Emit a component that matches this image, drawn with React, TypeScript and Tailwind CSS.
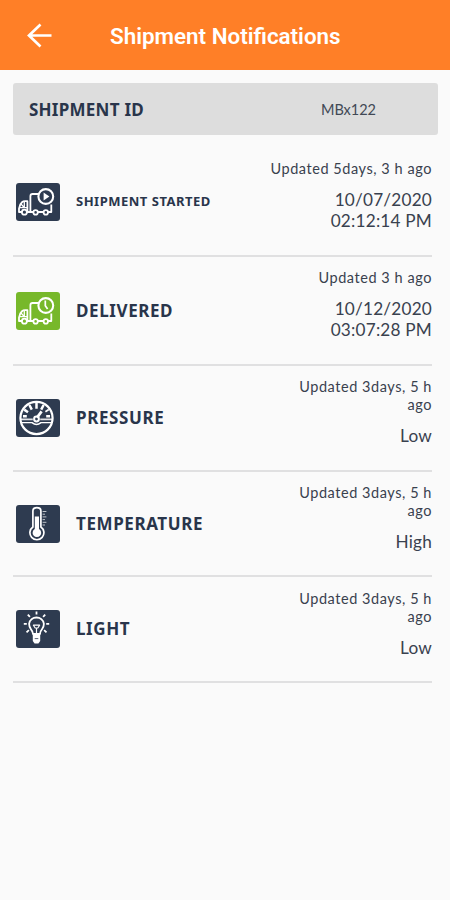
import type { ReactNode } from "react";
import clsx from "clsx";

interface Notification {
  label: string;
  updated: string;
  date?: string;
  value: string;
  icon: ReactNode;
  small?: boolean;
  delivered?: boolean;
}

function Truck({ children, fill }: { children: ReactNode; fill: string }) {
  return (
    <>
      <path d="M14.4 28V13.2Q14.4 11 16.6 11H23" />
      <path d="M35.3 21.5V29H3V25.5Q3.5 21.5 6 19.3Q7.2 18.2 9 18.2H11.4V28" />
      <path d="M8.3 18.5V24.6M3.5 24.6H11.4M5 21L8.3 24.6" strokeWidth="1.3" />
      <circle cx="8.4" cy="29.2" r="2.5" fill={fill} />
      <circle cx="19.6" cy="29.4" r="2.2" fill={fill} />
      <circle cx="29.8" cy="29.4" r="2.2" fill={fill} />
      <circle cx="29.8" cy="13.5" r="7.4" fill={fill} strokeWidth="2.1" />
      {children}
    </>
  );
}

const startedIcon = (
  <Truck fill="#2e3b50">
    <path d="M27.6 9.4L33.4 13.5L27.6 17.6Z" fill="white" stroke="none" />
  </Truck>
);

const deliveredIcon = (
  <Truck fill="#77b82a">
    <path d="M29.3 8.6V13.8L31.6 17" strokeWidth="1.7" />
  </Truck>
);

const pressureIcon = (
  <>
    <circle cx="20.5" cy="19" r="16.1" strokeWidth="2.2" />
    <path d="M7 17.2H10.8M8.2 10.6L12 13.2M13.4 6L15.8 10.6M20.5 4V9.8M27.6 6L25.2 10.6M30.2 17.2H34" strokeWidth="2.5" />
    <path d="M32.8 10.6L29.4 12.8" strokeWidth="1.8" />
    <path d="M5 20.4H16.8M24.2 20.4H36" strokeWidth="1.6" opacity="0.85" />
    <path d="M6 23.6H16Q20.5 27.4 25 23.6H35" strokeWidth="1.4" />
    <path d="M21 18.6L25.6 12.4" strokeWidth="2.7" />
    <circle cx="20.5" cy="20" r="2.4" strokeWidth="2" />
  </>
);

const temperatureIcon = (
  <>
    <path d="M16.9 22V6Q16.9 2.6 20.9 2.6Q24.9 2.6 24.9 6V22A7 7 0 1 1 16.9 22Z" strokeWidth="1.7" />
    <path d="M18.8 11.5H23V24A4.3 4.3 0 1 1 18.8 24Z" fill="white" stroke="none" />
    <path d="M26.6 6.5H30.4M26.6 9.2H29M26.6 11.9H30.4M26.6 14.6H29M26.6 17.3H30.4M26.6 20H29" strokeWidth="1" opacity="0.7" />
  </>
);

const lightIcon = (
  <>
    <path d="M17 24Q16.9 21.5 15 19.3Q13.1 17 13.1 13.8A7.5 7.5 0 0 1 27.9 13.8Q27.9 17 26 19.3Q24.1 21.5 24 24Z" strokeWidth="1.8" />
    <path d="M17.4 15.2H23.6L21.8 18H19.2ZM20.5 18V24" strokeWidth="1.2" />
    <path d="M16.8 25H24.2V31L22.4 33.4H18.6L16.8 31Z" fill="white" stroke="none" />
    <path d="M18.7 28.6H22.3" stroke="#2e3b50" strokeWidth="0.8" />
    <path d="M20.5 1.6V4.4M11.8 4.6L13.9 6.8M29.2 4.6L27.1 6.8M7.8 13.8H10.8M30.2 13.8H33.2M10.5 22.4L12.9 20.2M30.5 22.4L28.1 20.2" strokeWidth="1.8" />
  </>
);

const notifications: Notification[] = [
  {
    label: "SHIPMENT STARTED",
    updated: "Updated 5days, 3 h ago",
    date: "10/07/2020",
    value: "02:12:14 PM",
    icon: startedIcon,
    small: true,
  },
  {
    label: "DELIVERED",
    updated: "Updated 3 h ago",
    date: "10/12/2020",
    value: "03:07:28 PM",
    icon: deliveredIcon,
    delivered: true,
  },
  { label: "PRESSURE", updated: "Updated 3days, 5 h ago", value: "Low", icon: pressureIcon },
  { label: "TEMPERATURE", updated: "Updated 3days, 5 h ago", value: "High", icon: temperatureIcon },
  { label: "LIGHT", updated: "Updated 3days, 5 h ago", value: "Low", icon: lightIcon },
];

function NotificationRow({ item }: { item: Notification }) {
  return (
    <li
      className={clsx(
        "flex justify-between border-b-2 border-[#e0e0e1]",
        item.date ? "h-[109px]" : "h-[105.7px]"
      )}
    >
      <div className="flex items-center pl-[3px]">
        <svg
          viewBox="0 0 44 38"
          className={clsx("h-[38px] w-11 rounded-[3px]", item.delivered ? "bg-[#77b82a]" : "bg-[#2e3b50]")}
          fill="none"
          stroke="white"
          strokeWidth="1.8"
          strokeLinejoin="round"
        >
          {item.icon}
        </svg>
        <span
          className={clsx(
            "ml-4 font-bold whitespace-nowrap text-[#29354b]",
            item.small ? "text-[13px] tracking-[0.5px]" : "text-[17px] tracking-[0.6px]"
          )}
        >
          {item.label}
        </span>
      </div>
      <div
        className={clsx(
          "flex flex-col items-end pt-[12.4px] text-right font-['Lato',sans-serif] text-[#39414e]",
          item.date ? "w-[180px]" : "w-[145px]"
        )}
      >
        <p className="text-[14.5px] leading-[18px] tracking-[0.55px]">{item.updated}</p>
        <p className="mt-[11.8px] w-[110px] text-[17.2px] leading-[20.7px] tracking-[0.2px]">
          {item.date && <span>{item.date} </span>}
          {item.value}
        </p>
      </div>
    </li>
  );
}

export default function App() {
  return (
    <div className="flex h-[900px] w-[450px] flex-col overflow-hidden bg-[#fafafa] font-['Noto_Sans',sans-serif]">
      <header className="flex h-[70px] shrink-0 items-center bg-[#ff7f27] pt-[2px] text-white">
        <svg
          viewBox="0 0 26 26"
          className="ml-[26px] h-[26px] w-[26px]"
          fill="none"
          stroke="currentColor"
          strokeWidth="2.7"
        >
          <path d="M25.5 12.5H3M14.5 1.5L3 12.5L14.5 23.5" />
        </svg>
        <h1 className="ml-[58px] pt-[2px] font-['Roboto',sans-serif] text-[22.4px] font-semibold whitespace-nowrap">
          Shipment Notifications
        </h1>
      </header>
      <main className="pt-[13px] pr-3 pl-[13px]">
        <section className="flex h-[52px] items-center justify-between rounded-[3px] bg-[#dddddd] pt-px pr-[62px] pl-4">
          <h2 className="text-[17px] font-bold tracking-[0.25px] text-[#29354b]">SHIPMENT ID</h2>
          <span className="font-['Lato',sans-serif] text-[14.5px] text-[#414955]">MBx122</span>
        </section>
        <ul className="mt-[13px] mr-[6px]">
          {notifications.map((item) => (
            <NotificationRow key={item.label} item={item} />
          ))}
        </ul>
      </main>
    </div>
  );
}
